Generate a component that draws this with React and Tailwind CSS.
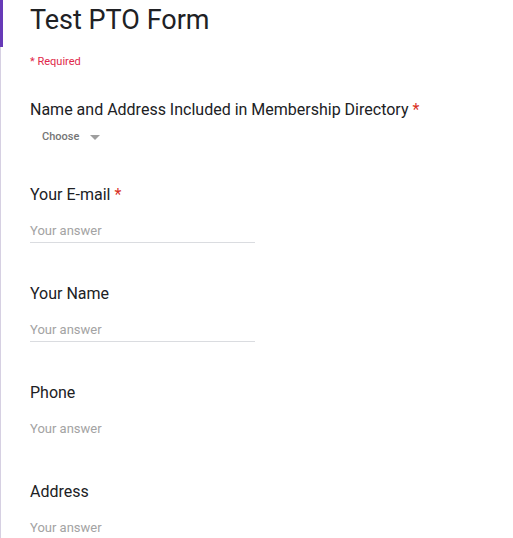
import React from 'react';

const questions = [
  { label: 'Your E-mail', required: true, line: true },
  { label: 'Your Name', required: false, line: true },
  { label: 'Phone', required: false, line: false },
  { label: 'Address', required: false, line: false },
];

function Asterisk() {
  return <span className="text-[#d93025]"> *</span>;
}

function Question({ label, required, line }) {
  return (
    <div className="h-[99px]">
      <div className="text-[16px] leading-[24px] text-[#202124]">
        {label}
        {required && <Asterisk />}
      </div>
      <div
        className={`mt-[16px] w-[225px] pb-[3px] border-b ${
          line ? 'border-[#dadce0]' : 'border-transparent'
        }`}
      >
        <div className="text-[13px] leading-[16px] text-[#a3a3a3]">Your answer</div>
      </div>
    </div>
  );
}

export default function App() {
  return (
    <div
      className="flex min-h-[538px] bg-white overflow-hidden"
      style={{ fontFamily: 'Roboto, "Noto Sans", Arial, sans-serif' }}
    >
      {/* left accent of the card */}
      <div className="flex flex-col w-[3px] shrink-0">
        <div className="h-[47px] bg-[#673ab7]" />
        <div className="flex-1 w-px bg-[#d6d0e2]" />
      </div>

      <div className="flex-1 pl-[27px] h-[538px] overflow-hidden">
        <h1 className="text-[27px] leading-[40px] text-[#202124]">Test PTO Form</h1>
        <div className="mt-[15px] text-[11px] leading-[14px] text-[#e0284a]">* Required</div>

        {/* dropdown question */}
        <div className="mt-[29px] h-[85px]">
          <div className="text-[16px] leading-[24px] text-[#202124]">
            Name and Address Included in Membership Directory
            <Asterisk />
          </div>
          <div className="mt-[7px] ml-[12px] flex items-center gap-[11px]">
            <span className="text-[11px] leading-[16px] font-medium text-[#757575]">Choose</span>
            <svg width="10" height="5" viewBox="0 0 10 5" className="mt-px">
              <path d="M0 0 L10 0 L5 5 Z" fill="#9e9e9e" />
            </svg>
          </div>
        </div>

        {questions.map((q) => (
          <Question key={q.label} {...q} />
        ))}
      </div>
    </div>
  );
}
